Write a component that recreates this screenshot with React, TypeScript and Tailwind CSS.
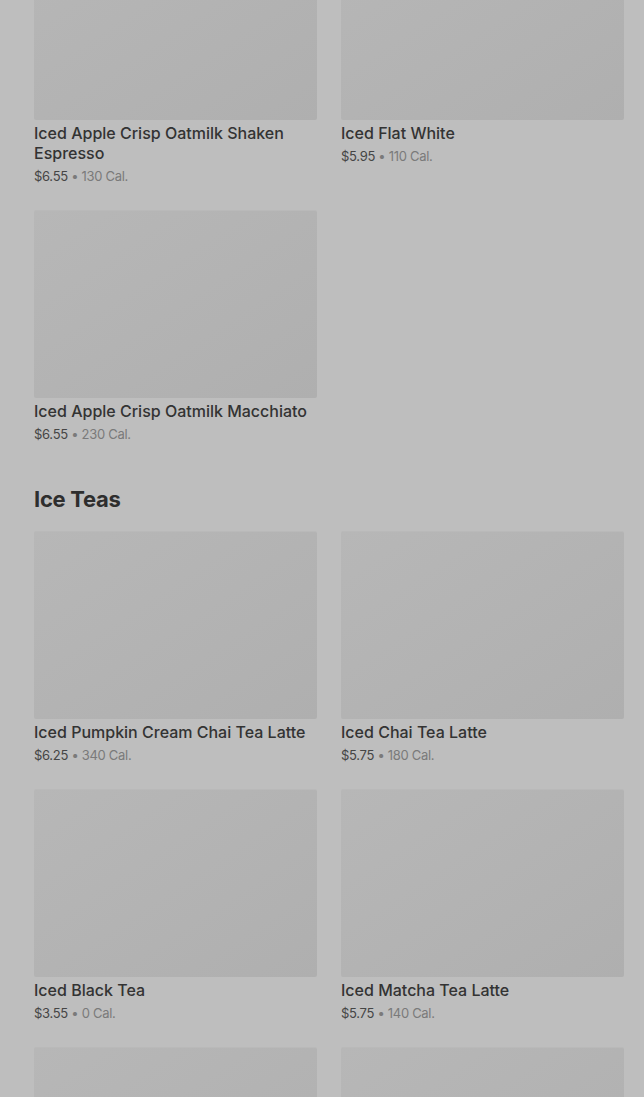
import React from "react";

type Item = { name: string; price: string; cal: string };

const espresso: Item[] = [
  { name: "Iced Apple Crisp Oatmilk Shaken Espresso", price: "$6.55", cal: "130 Cal." },
  { name: "Iced Flat White", price: "$5.95", cal: "110 Cal." },
  { name: "Iced Apple Crisp Oatmilk Macchiato", price: "$6.55", cal: "230 Cal." },
];

const teas: Item[] = [
  { name: "Iced Pumpkin Cream Chai Tea Latte", price: "$6.25", cal: "340 Cal." },
  { name: "Iced Chai Tea Latte", price: "$5.75", cal: "180 Cal." },
  { name: "Iced Black Tea", price: "$3.55", cal: "0 Cal." },
  { name: "Iced Matcha Tea Latte", price: "$5.75", cal: "140 Cal." },
  { name: "Iced Lemon Tea", price: "$3.95", cal: "70 Cal." },
  { name: "Iced Peach Green Tea", price: "$4.25", cal: "60 Cal." },
];

const MenuCard = ({ item }: { item: Item }) => (
  <div className="flex flex-col">
    <div className="h-[188px] w-full rounded-[2px] bg-gradient-to-br from-[#b7b7b7] via-[#b3b3b3] to-[#afafaf] border-t border-[#b9b9b9]" />
    <h3 className="mt-[3px] text-[16px] leading-[20px] font-medium text-[#333333]">
      {item.name}
    </h3>
    <p className="mt-[3px] text-[13px] leading-[20px] text-[#454545] tracking-[-0.3px]">
      {item.price}
      <span className="text-[#7a7a7a]"> • {item.cal}</span>
    </p>
  </div>
);

export default function App() {
  return (
    <div
      className="h-[1097px] overflow-hidden bg-[#bebebe] pl-[34px] pr-[20px]"
      style={{ fontFamily: "Inter, 'Noto Sans', sans-serif" }}
    >
      {/* Espresso (scrolled past the top) */}
      <div className="grid grid-cols-2 gap-x-[24px] gap-y-[24px] -mt-[68px]">
        {espresso.map((item) => (
          <MenuCard key={item.name} item={item} />
        ))}
      </div>

      <h2 className="mt-[39px] text-[22px] leading-[32px] font-bold text-[#2e2e2e] tracking-[-0.3px]">
        Ice Teas
      </h2>

      <div className="mt-[16px] grid grid-cols-2 gap-x-[24px] gap-y-[24px]">
        {teas.map((item) => (
          <MenuCard key={item.name} item={item} />
        ))}
      </div>
    </div>
  );
}
